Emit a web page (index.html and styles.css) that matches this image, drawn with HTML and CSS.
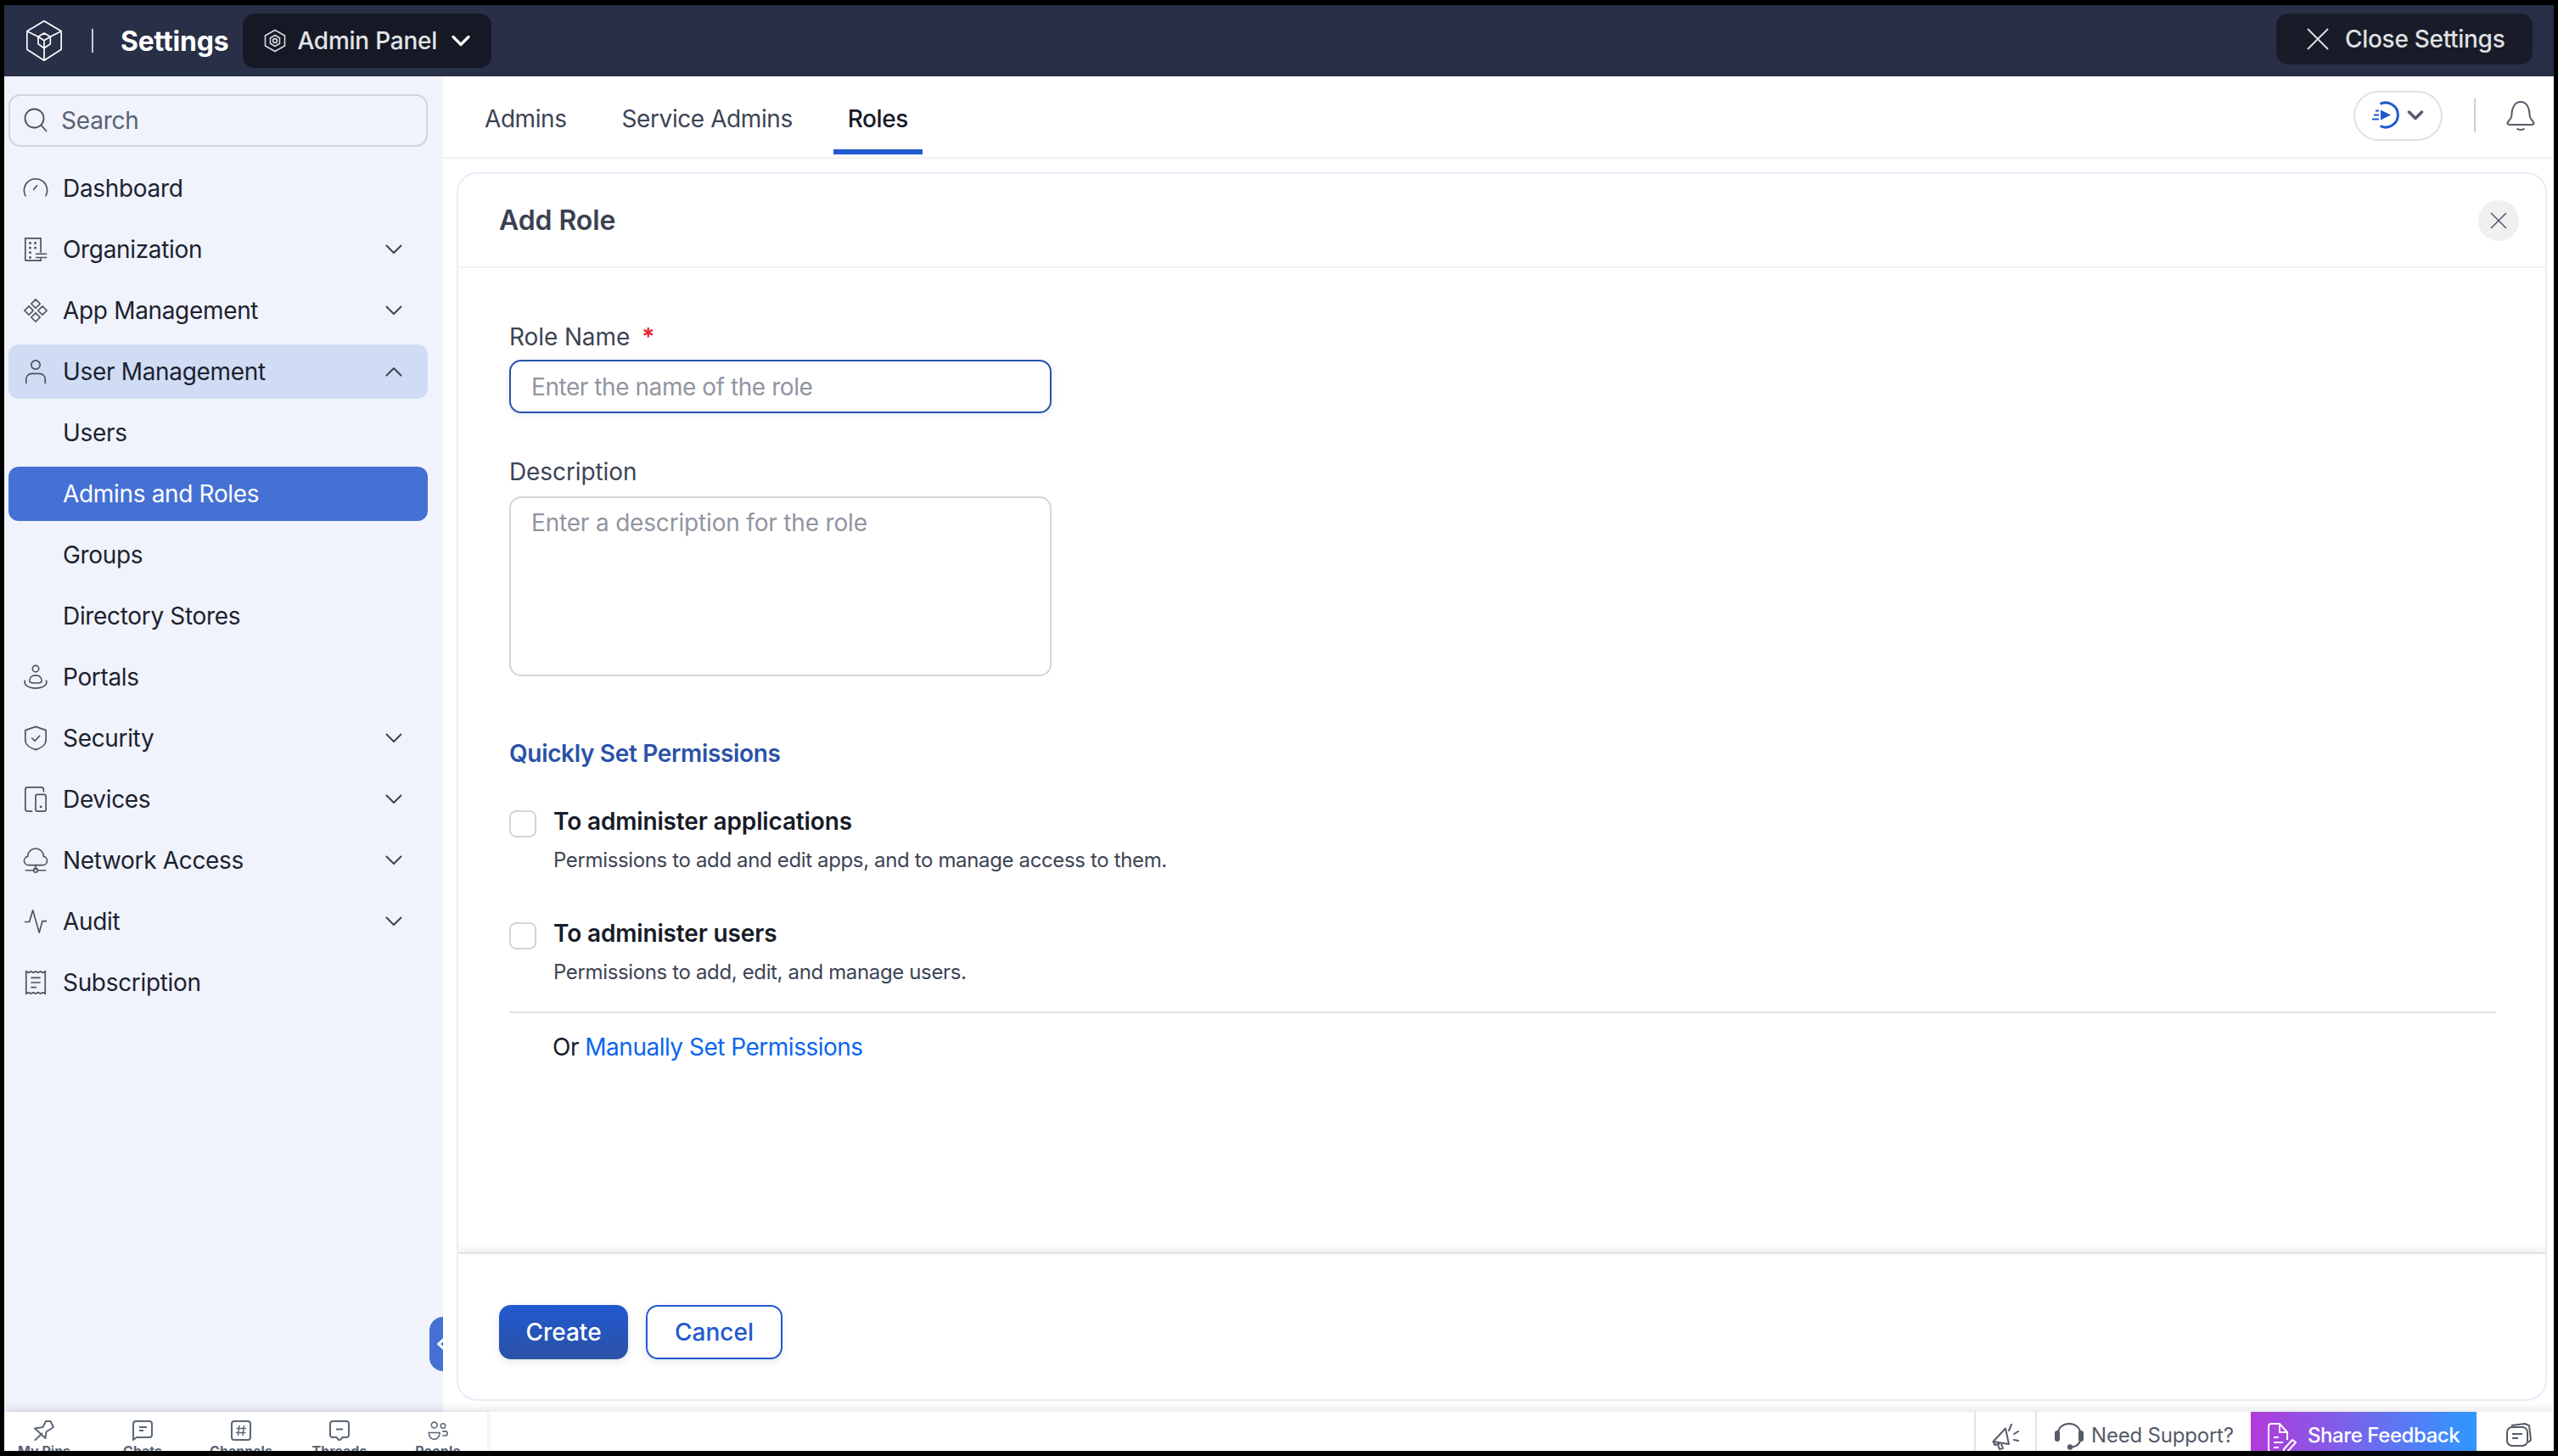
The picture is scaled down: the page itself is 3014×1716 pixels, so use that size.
FILE: index.html
```html
<!DOCTYPE html>
<html lang="en">
<head>
<meta charset="utf-8">
<title>Settings - Add Role</title>
<link rel="stylesheet" href="styles.css">
</head>
<body>
<div class="app">
  <header class="topbar">
    <svg class="logo" viewBox="0 0 42 48" fill="none" stroke="#fff" stroke-width="1.700" stroke-linejoin="round"><path d="M21 .8 41.200 12.700v21.600L21 47.200.8 34.300V12.700z"/><path d="M.8 12.700 14 19.300M41.200 12.700 28.300 19.300M21 47.200V32.700"/><path d="M14 19.300 21 15l7.300 4.300L21 23.700zM14 19.300v8.400l7 5 7.300-5v-8.400M21 23.700v9"/></svg>
    <span class="topbar-sep"></span>
    <span class="topbar-title">Settings</span>
    <div class="panel-pill">
      <svg class="panel-icon" viewBox="0 0 26 28" fill="none" stroke="#d8dae0" stroke-width="1.600"><path d="M13 1.500 24.500 8v12L13 26.500 1.500 20V8z"/><path d="M13 7.500l5.500 3.200v6.600L13 20.500l-5.500-3.200v-6.600z"/><circle cx="13" cy="14" r="2.400"/></svg>
      <span>Admin Panel</span>
      <svg class="panel-chevron" viewBox="0 0 22 14" fill="none" stroke="#fff" stroke-width="3.200" stroke-linecap="round" stroke-linejoin="round"><path d="M2 2.500l9 9 9-9"/></svg>
    </div>
    <div class="close-pill">
      <svg class="close-icon" viewBox="0 0 26 26" fill="none" stroke="#dfe0e4" stroke-width="1.800"><path d="M1 1l24 24M25 1 1 25"/></svg>
      <span>Close Settings</span>
    </div>
  </header>

  <div class="workspace">
    <aside class="sidebar">
      <div class="search">
        <svg class="search-icon" viewBox="0 0 28 30" fill="none" stroke="#4a5260" stroke-width="1.800"><circle cx="12.500" cy="12.500" r="11"/><path d="M20.500 20.500 27 28"/></svg>
        <span>Search</span>
      </div>
      <nav class="nav">
        <a class="nav-row">
          <svg class="nav-icon" viewBox="0 0 32 32" fill="none" stroke="#4a5260" stroke-width="1.800"><path d="M3.600 26A14.500 14.500 0 1 1 28.400 26"/><path d="M13 18l5-6"/></svg>
          <span class="nav-label">Dashboard</span>
        </a>
        <a class="nav-row">
          <svg class="nav-icon" viewBox="0 0 32 32" fill="none" stroke="#4a5260" stroke-width="1.800"><path d="M3 30V2h19.500v18M3 30h19.500v-3"/><path d="M9 8h.1M15.500 8h.1M9 14h.1M15.500 14h.1M9 20h.1M9 26h.1" stroke-width="3" stroke-linecap="round"/><path d="M16 21.500h14M16 26h14" stroke-width="1.600"/></svg>
          <span class="nav-label">Organization</span>
          <svg class="chev" viewBox="0 0 20 12" fill="none" stroke="#3d4350" stroke-width="2" stroke-linecap="round" stroke-linejoin="round"><path d="M1.500 1.500 10 10l8.500-8.500"/></svg>
        </a>
        <a class="nav-row">
          <svg class="nav-icon" viewBox="0 0 32 32" fill="none" stroke="#4a5260" stroke-width="1.700"><path d="M16 2l5.500 5.500L16 13l-5.500-5.500zM16 19l5.500 5.500L16 30l-5.500-5.500zM7.500 10.500 13 16l-5.500 5.500L2 16zM24.500 10.500 30 16l-5.500 5.500L19 16z"/></svg>
          <span class="nav-label">App Management</span>
          <svg class="chev" viewBox="0 0 20 12" fill="none" stroke="#3d4350" stroke-width="2" stroke-linecap="round" stroke-linejoin="round"><path d="M1.500 1.500 10 10l8.500-8.500"/></svg>
        </a>
        <a class="nav-row nav-row-open">
          <svg class="nav-icon" viewBox="0 0 32 32" fill="none" stroke="#4a5260" stroke-width="1.800"><circle cx="16" cy="7.500" r="5.500"/><path d="M4 31v-5.500a7 7 0 0 1 7-7h10a7 7 0 0 1 7 7V31"/></svg>
          <span class="nav-label">User Management</span>
          <svg class="chev" viewBox="0 0 20 12" fill="none" stroke="#3d4350" stroke-width="2" stroke-linecap="round" stroke-linejoin="round"><path d="M1.500 10.500 10 2l8.500 8.500"/></svg>
        </a>
        <a class="nav-row"><span class="nav-spacer"></span><span class="nav-label">Users</span></a>
        <a class="nav-row nav-row-active"><span class="nav-spacer"></span><span class="nav-label">Admins and Roles</span></a>
        <a class="nav-row"><span class="nav-spacer"></span><span class="nav-label">Groups</span></a>
        <a class="nav-row"><span class="nav-spacer"></span><span class="nav-label">Directory Stores</span></a>
        <a class="nav-row">
          <svg class="nav-icon" viewBox="0 0 32 32" fill="none" stroke="#4a5260" stroke-width="1.700"><circle cx="16" cy="5.500" r="4"/><path d="M8.500 22v-2a6 6 0 0 1 6-6h3a6 6 0 0 1 6 6v2"/><path d="M3 20c-3 5 3 10 13 10s16-5 13-10"/><path d="M8.500 22c2 2 13 2 15 0"/></svg>
          <span class="nav-label">Portals</span>
        </a>
        <a class="nav-row">
          <svg class="nav-icon" viewBox="0 0 32 32" fill="none" stroke="#4a5260" stroke-width="1.800"><path d="M16 1.500 29 6v12c0 6-6 10.500-13 12.500C9 28.500 3 24 3 18V6z"/><path d="M11 15.500l4 4 6.500-7"/></svg>
          <span class="nav-label">Security</span>
          <svg class="chev" viewBox="0 0 20 12" fill="none" stroke="#3d4350" stroke-width="2" stroke-linecap="round" stroke-linejoin="round"><path d="M1.500 1.500 10 10l8.500-8.500"/></svg>
        </a>
        <a class="nav-row">
          <svg class="nav-icon" viewBox="0 0 32 32" fill="none" stroke="#4a5260" stroke-width="1.800"><path d="M12 31H6a3 3 0 0 1-3-3V4a3 3 0 0 1 3-3h17a3 3 0 0 1 3 3v3"/><rect x="16" y="10" width="13" height="21" rx="2.500"/><path d="M22.500 25.500h.1" stroke-width="3" stroke-linecap="round"/></svg>
          <span class="nav-label">Devices</span>
          <svg class="chev" viewBox="0 0 20 12" fill="none" stroke="#3d4350" stroke-width="2" stroke-linecap="round" stroke-linejoin="round"><path d="M1.500 1.500 10 10l8.500-8.500"/></svg>
        </a>
        <a class="nav-row">
          <svg class="nav-icon" viewBox="0 0 32 32" fill="none" stroke="#4a5260" stroke-width="1.700"><path d="M8 22H7a5.500 5.500 0 0 1-1-10.900 10 10 0 0 1 20 0A5.500 5.500 0 0 1 25 22z"/><path d="M16 22v6M3 28.500h10M19 28.500h10"/><circle cx="16" cy="28.500" r="2.500"/></svg>
          <span class="nav-label">Network Access</span>
          <svg class="chev" viewBox="0 0 20 12" fill="none" stroke="#3d4350" stroke-width="2" stroke-linecap="round" stroke-linejoin="round"><path d="M1.500 1.500 10 10l8.500-8.500"/></svg>
        </a>
        <a class="nav-row">
          <svg class="nav-icon" viewBox="0 0 32 32" fill="none" stroke="#4a5260" stroke-width="1.800" stroke-linejoin="round"><path d="M2 16.500h6L12.500 2l8 28 4-14.500H30"/></svg>
          <span class="nav-label">Audit</span>
          <svg class="chev" viewBox="0 0 20 12" fill="none" stroke="#3d4350" stroke-width="2" stroke-linecap="round" stroke-linejoin="round"><path d="M1.500 1.500 10 10l8.500-8.500"/></svg>
        </a>
        <a class="nav-row">
          <svg class="nav-icon" viewBox="0 0 32 32" fill="none" stroke="#4a5260" stroke-width="1.800"><path d="M4 2l3 1.500L10 2l3 1.500L16 2l3 1.500L22 2l3 1.500L28 2v28l-3-1.500L22 30l-3-1.500L16 30l-3-1.500L10 30l-3-1.500L4 30z"/><path d="M10 10h12M10 16h12M10 22h7"/></svg>
          <span class="nav-label">Subscription</span>
        </a>
      </nav>
      <div class="collapse-tab"><span class="collapse-arrow"></span></div>
    </aside>

    <main class="main">
      <div class="tabs">
        <a class="tab">Admins</a>
        <a class="tab">Service Admins</a>
        <a class="tab tab-active">Roles</a>
        <div class="tabs-tools">
          <div class="play-pill">
            <svg class="play-icon" viewBox="0 0 32 34" fill="none" stroke="#2159cf" stroke-width="3"><path d="M9.500 3.500a14.500 14.500 0 1 1 0 26"/><path d="M10 10.500v12L22 16.500z" fill="#2159cf" stroke="none"/><path d="M4 11.500h4M2 16.500h6M0 21.500h8" stroke-width="2"/></svg>
            <svg class="play-chev" viewBox="0 0 20 12" fill="none" stroke="#555b68" stroke-width="3.500" stroke-linecap="round" stroke-linejoin="round"><path d="M2.500 2 10 9.500 17.500 2"/></svg>
          </div>
          <span class="tools-sep"></span>
          <svg class="bell" viewBox="0 0 34 38" fill="none" stroke="#555b68" stroke-width="2"><path d="M1.500 28c0-2 3.500-3.500 4.500-7 1-4 0-7 2-11 1.500-4 5-7 9-7s7.500 3 9 7c2 4 1 7 2 11 1 3.500 4.500 5 4.500 7 0 1.500-1 2-3 2H4.500c-2 0-3-.5-3-2z"/><path d="M12.500 34.500c2.500 2 6.500 2 9 0"/></svg>
        </div>
      </div>

      <section class="card">
        <div class="card-head">
          <h1 class="card-title">Add Role</h1>
          <button class="card-close">
            <svg class="card-close-icon" viewBox="0 0 20 20" fill="none" stroke="#555b68" stroke-width="1.500"><path d="M1 1l18 18M19 1 1 19"/></svg>
          </button>
        </div>
        <div class="card-body">
          <label class="field-label">Role Name<span class="req">*</span></label>
          <div class="input input-focus">Enter the name of the role</div>
          <label class="field-label desc-label">Description</label>
          <div class="input textarea">Enter a description for the role</div>
          <h2 class="quick-title">Quickly Set Permissions</h2>
          <div class="option">
            <span class="checkbox"></span>
            <div class="option-text">
              <div class="option-title">To administer applications</div>
              <div class="option-desc">Permissions to add and edit apps, and to manage access to them.</div>
            </div>
          </div>
          <div class="option option-next">
            <span class="checkbox"></span>
            <div class="option-text">
              <div class="option-title">To administer users</div>
              <div class="option-desc">Permissions to add, edit, and manage users.</div>
            </div>
          </div>
          <div class="divider"></div>
          <p class="manual">Or <a class="manual-link">Manually Set Permissions</a></p>
        </div>
        <div class="card-foot">
          <button class="btn btn-primary">Create</button>
          <button class="btn btn-secondary">Cancel</button>
        </div>
      </section>
    </main>
  </div>

  <footer class="bottombar">
    <div class="quick-apps">
      <div class="app-item">
        <svg class="app-icon" viewBox="0 0 24 24" fill="none" stroke="#5b6878" stroke-width="2" stroke-linejoin="round" stroke-linecap="round"><path d="M1 9.500l9.500-1.500 3.500-7h5.500l3.500 7-8.500 5.500-1 7.500z"/><path d="M9.500 15.500 1.500 23"/></svg>
        <span>My Pins</span>
      </div>
      <div class="app-item">
        <svg class="app-icon" viewBox="0 0 24 24" fill="none" stroke="#5b6878" stroke-width="2"><path d="M1 23V4a3 3 0 0 1 3-3h16a3 3 0 0 1 3 3v13a3 3 0 0 1-3 3H5z"/><path d="M8 8h9M8 12h5"/></svg>
        <span>Chats</span>
      </div>
      <div class="app-item">
        <svg class="app-icon" viewBox="0 0 24 24" fill="none" stroke="#5b6878" stroke-width="2"><rect x="1" y="1" width="22" height="22" rx="3"/><path d="M10 6 8.500 18M15.500 6 14 18M6.500 9.500h11.500M6 14.500h11.500" stroke-width="1.500"/></svg>
        <span>Channels</span>
      </div>
      <div class="app-item">
        <svg class="app-icon" viewBox="0 0 24 24" fill="none" stroke="#5b6878" stroke-width="2"><path d="M4 1h16a3 3 0 0 1 3 3v13a3 3 0 0 1-3 3h-4.500L12 24l-3.500-4H4a3 3 0 0 1-3-3V4a3 3 0 0 1 3-3z"/><path d="M8 10.500h8"/></svg>
        <span>Threads</span>
      </div>
      <div class="app-item">
        <svg class="app-icon" viewBox="0 0 28 26" fill="none" stroke="#5b6878" stroke-width="1.800"><circle cx="9" cy="5.500" r="4"/><circle cx="21" cy="6.500" r="3.200"/><path d="M1.500 16h15c0 5-3 9-7.500 9S1.500 21 1.500 16z"/><path d="M20 14h4a3 3 0 0 1 0 6h-4"/></svg>
        <span>People</span>
      </div>
    </div>
    <div class="bottom-right">
      <div class="bottom-cell">
        <svg class="mega" viewBox="0 0 32 32" fill="none" stroke="#555b68" stroke-width="2" stroke-linejoin="round"><path d="M1.500 21 16 5.500 20 24z"/><path d="M1.500 21l2 4 6-1.500"/><path d="M7 25l2 5 4-1-2-5.500"/><path d="M23 1l-3 7M26 12l5-3M26 19l5 1" stroke-linecap="round"/></svg>
      </div>
      <div class="support">
        <svg class="headset" viewBox="0 0 34 32" fill="none" stroke="#555b68" stroke-width="2.200"><path d="M4 13C4 5 10 1 17 1s13 4 13 12v6c0 5-3 8-9 9.500"/><rect x="0" y="9" width="6" height="13" rx="3" fill="#555b68" stroke="none"/><rect x="28" y="9" width="6" height="13" rx="3" fill="#555b68" stroke="none"/><circle cx="18" cy="28.500" r="3.200" fill="#555b68" stroke="none"/></svg>
        <span>Need Support?</span>
      </div>
      <div class="feedback">
        <svg class="feedback-icon" viewBox="0 0 34 46" fill="none" stroke="#fff" stroke-width="2" stroke-linejoin="round"><path d="M13 34H4a3 3 0 0 1-3-3V4a3 3 0 0 1 3-3h10l9 10v9"/><path d="M14 1v10h9"/><path d="M7 17h6M7 23h11M7 29h6"/><path d="M18 38l1-7 10-11 4 3-10 11z"/></svg>
        <span>Share Feedback</span>
      </div>
      <div class="notes-cell">
        <svg class="notes" viewBox="0 0 30 28" fill="none" stroke="#555b68" stroke-width="2"><path d="M6 3l16-2 5 2 2 17-3 3"/><rect x="1" y="5" width="24" height="22" rx="6"/><path d="M7 13h12M7 18h7"/></svg>
      </div>
    </div>
  </footer>
</div>
</body>
</html>
```

FILE: styles.css
```css
* { box-sizing: border-box; }
html, body { margin: 0; height: 100%; }
body { background: #000; font-family: Inter, "Liberation Sans", sans-serif; overflow: hidden; }

.app { width: 3004px; height: 1704px; margin: 6px 5px; display: flex; flex-direction: column; background: #fff; overflow: hidden; }

/* Top bar */
.topbar { height: 84px; flex: none; background: #282f47; display: flex; align-items: center; padding: 0 25px 0 26px; }
.logo { width: 42px; height: 48px; flex: none; }
.topbar-sep { width: 2px; height: 28px; background: #c9ccd4; margin: 0 32px 0 35px; }
.topbar-title { color: #fff; font-size: 32px; font-weight: 700; letter-spacing: -.2px; }
.panel-pill { margin-left: 17px; width: 293px; height: 64px; border-radius: 14px; background: #161925; display: flex; align-items: center; padding-left: 25px; color: #e3e4e8; font-size: 28px; font-weight: 500; letter-spacing: -.25px; }
.panel-icon { width: 26px; height: 28px; margin-right: 13px; flex: none; }
.panel-chevron { width: 22px; height: 14px; margin-left: auto; margin-right: 25px; flex: none; }
.close-pill { margin-left: auto; width: 302px; height: 60px; margin-top: -4px; border-radius: 14px; background: #191c28; display: flex; align-items: center; padding-left: 36px; color: #dfe0e4; font-size: 28px; font-weight: 500; letter-spacing: -.3px; }
.close-icon { width: 26px; height: 26px; margin-right: 19px; flex: none; }

/* Layout */
.workspace { flex: 1; display: flex; min-height: 0; }

/* Sidebar */
.sidebar { position: relative; width: 517px; flex: none; background: #f0f3fb; padding: 21px 18px 0 5px; }
.search { height: 62px; border: 2px solid #d2d4d8; border-radius: 14px; display: flex; align-items: center; padding-left: 16px; color: #5a6272; font-size: 28px; letter-spacing: -.2px; }
.search-icon { width: 28px; height: 30px; margin-right: 16px; flex: none; }
.nav { margin-top: 17px; display: flex; flex-direction: column; gap: 8px; }
.nav-row { height: 64px; border-radius: 12px; display: flex; align-items: center; padding: 0 30px 0 17px; color: #1c2230; font-size: 28px; letter-spacing: -.33px; }
.nav-icon { width: 30px; height: 30px; flex: none; margin-right: 17px; }
.nav-spacer { width: 30px; margin-right: 17px; flex: none; }
.nav-label { flex: 1; }
.chev { width: 20px; height: 12px; flex: none; }
.nav-row-open { background: #d0dcf4; }
.nav-row-active { background: #4570d4; color: #fff; }
.collapse-tab { position: absolute; right: 0; top: 1462px; width: 16px; height: 64px; border-radius: 16px 0 0 16px; background: #4570d4; overflow: hidden; }
.collapse-arrow { position: absolute; left: 11px; top: 27px; width: 10px; height: 10px; border-left: 3px solid #fff; border-bottom: 3px solid #fff; transform: rotate(45deg); }

/* Main */
.main { flex: 1; min-width: 0; display: flex; flex-direction: column; padding-bottom: 13px; }
.tabs { height: 97px; flex: none; border-bottom: 2px solid #f0f1f3; display: flex; align-items: stretch; padding: 0 22px 3px 32px; gap: 31px; }
.tab { padding: 30px 17px 16px; line-height: 40px; font-size: 28px; letter-spacing: -.42px; color: #3c4454; border-bottom: 6px solid transparent; }
.tab-active { color: #161b28; font-weight: 500; border-bottom-color: #2159cf; }
.tabs-tools { margin-left: auto; display: flex; align-items: center; }
.play-pill { width: 105px; height: 59px; border: 2px solid #e0e0e2; border-radius: 30px; display: flex; align-items: center; padding-left: 20px; }
.play-icon { width: 32px; height: 34px; flex: none; }
.play-chev { width: 20px; height: 12px; margin-left: 9px; flex: none; }
.tools-sep { width: 2px; height: 40px; background: #cfd0d4; margin: 0 36px 0 37px; }
.bell { width: 34px; height: 38px; flex: none; }

/* Card */
.card { flex: 1; min-height: 0; margin: 16px 8px 0 16px; border: 2px solid #e6ecf8; border-radius: 24px; display: flex; flex-direction: column; background: #fff; overflow: hidden; }
.card-head { height: 111px; flex: none; border-bottom: 2px solid #f1f2f4; display: flex; align-items: center; justify-content: space-between; padding: 0 31px 0 48px; }
.card-title { margin: 0; font-size: 32px; font-weight: 600; letter-spacing: -.1px; color: #3a4150; }
.card-close { width: 48px; height: 48px; border: 0; border-radius: 50%; background: #f0f0f1; display: flex; align-items: center; justify-content: center; padding: 0; }
.card-close-icon { width: 20px; height: 20px; }
.card-body { flex: 1; padding: 63px 58px 0 60px; }
.field-label { display: block; height: 36px; line-height: 36px; font-size: 28px; letter-spacing: -.1px; color: #3c4454; margin-bottom: 9px; }
.req { color: #e8202a; margin-left: 14px; font-weight: 600; }
.desc-label { margin-top: 51px; margin-bottom: 11px; }
.input { width: 639px; height: 63px; border: 2px solid #d4d5d8; border-radius: 14px; padding: 0 24px; line-height: 60px; font-size: 28px; letter-spacing: -.44px; color: #90959f; }
.input-focus { border-color: #2a52a8; box-shadow: 0 2px 8px rgba(42, 82, 168, .12); }
.textarea { height: 212px; line-height: 36px; padding-top: 11px; letter-spacing: -.18px; }
.quick-title { margin: 73px 0 0; height: 36px; line-height: 36px; font-size: 28px; font-weight: 600; letter-spacing: -.33px; color: #2a52a8; }
.option { display: flex; margin-top: 44px; }
.option-next { margin-top: 50px; }
.checkbox { width: 32px; height: 32px; margin-top: 5px; border: 2px solid #d4d5d8; border-radius: 8px; flex: none; }
.option-text { margin-left: 20px; }
.option-title { line-height: 36px; font-size: 28px; font-weight: 600; letter-spacing: -.15px; color: #161b28; }
.option-desc { margin-top: 10px; line-height: 36px; font-size: 24px; letter-spacing: -.36px; color: #3c4454; }
.divider { height: 2px; margin-top: 28px; background: #e2e3e6; }
.manual { margin: 22px 0 0 51px; line-height: 36px; font-size: 28px; letter-spacing: -.5px; color: #161b28; }
.manual-link { color: #0a66ee; }
.card-foot { height: 173px; flex: none; border-top: 2px solid #e2e2e2; box-shadow: 0 -4px 8px rgba(0, 0, 0, .07); padding: 60px 0 0 48px; display: flex; align-items: flex-start; gap: 21px; }
.btn { height: 64px; border-radius: 14px; font: 500 28px Inter, "Liberation Sans", sans-serif; box-shadow: 0 3px 8px rgba(30, 50, 100, .12); }
.btn-primary { width: 152px; border: 0; color: #fff; background: linear-gradient(#2159cf, #2b52a5); }
.btn-secondary { width: 161px; border: 2px solid #2159cf; color: #2159cf; background: #fff; }

/* Bottom bar */
.bottombar { height: 46px; flex: none; position: relative; display: flex; justify-content: space-between; background: #fff; box-shadow: 0 -4px 8px rgba(0, 0, 0, .09); }
.quick-apps { width: 569px; height: 46px; overflow: hidden; display: flex; box-shadow: 2px 0 4px rgba(0, 0, 0, .08); background: #fff; }
.app-item { width: 116px; flex: none; display: flex; flex-direction: column; align-items: center; padding-top: 10px; margin-left: -11px; margin-right: 11px; color: #5a6676; font-size: 16px; font-weight: 700; line-height: 18px; }
.app-icon { width: 24px; height: 24px; margin-bottom: 3px; flex: none; }
.bottom-right { display: flex; height: 46px; overflow: hidden; }
.bottom-cell { width: 74px; border-left: 2px solid #e3e4e6; border-right: 2px solid #e3e4e6; display: flex; justify-content: center; padding-top: 14px; }
.mega { width: 32px; height: 32px; flex: none; }
.support { width: 252px; display: flex; align-items: flex-start; padding: 13px 0 0 21px; color: #555b68; font-size: 24px; line-height: 30px; letter-spacing: -.2px; white-space: nowrap; }
.headset { width: 34px; height: 32px; margin-right: 9px; flex: none; }
.feedback { width: 266px; background: linear-gradient(90deg, #b33ada, #2e98ff); display: flex; padding: 13px 0 0 20px; color: #fff; font-size: 24px; font-weight: 500; line-height: 30px; letter-spacing: -.42px; white-space: nowrap; }
.feedback-icon { width: 34px; height: 46px; margin-right: 13px; flex: none; }
.notes-cell { width: 91px; display: flex; justify-content: center; padding: 13px 0 0 8px; }
.notes { width: 30px; height: 28px; flex: none; }
```
